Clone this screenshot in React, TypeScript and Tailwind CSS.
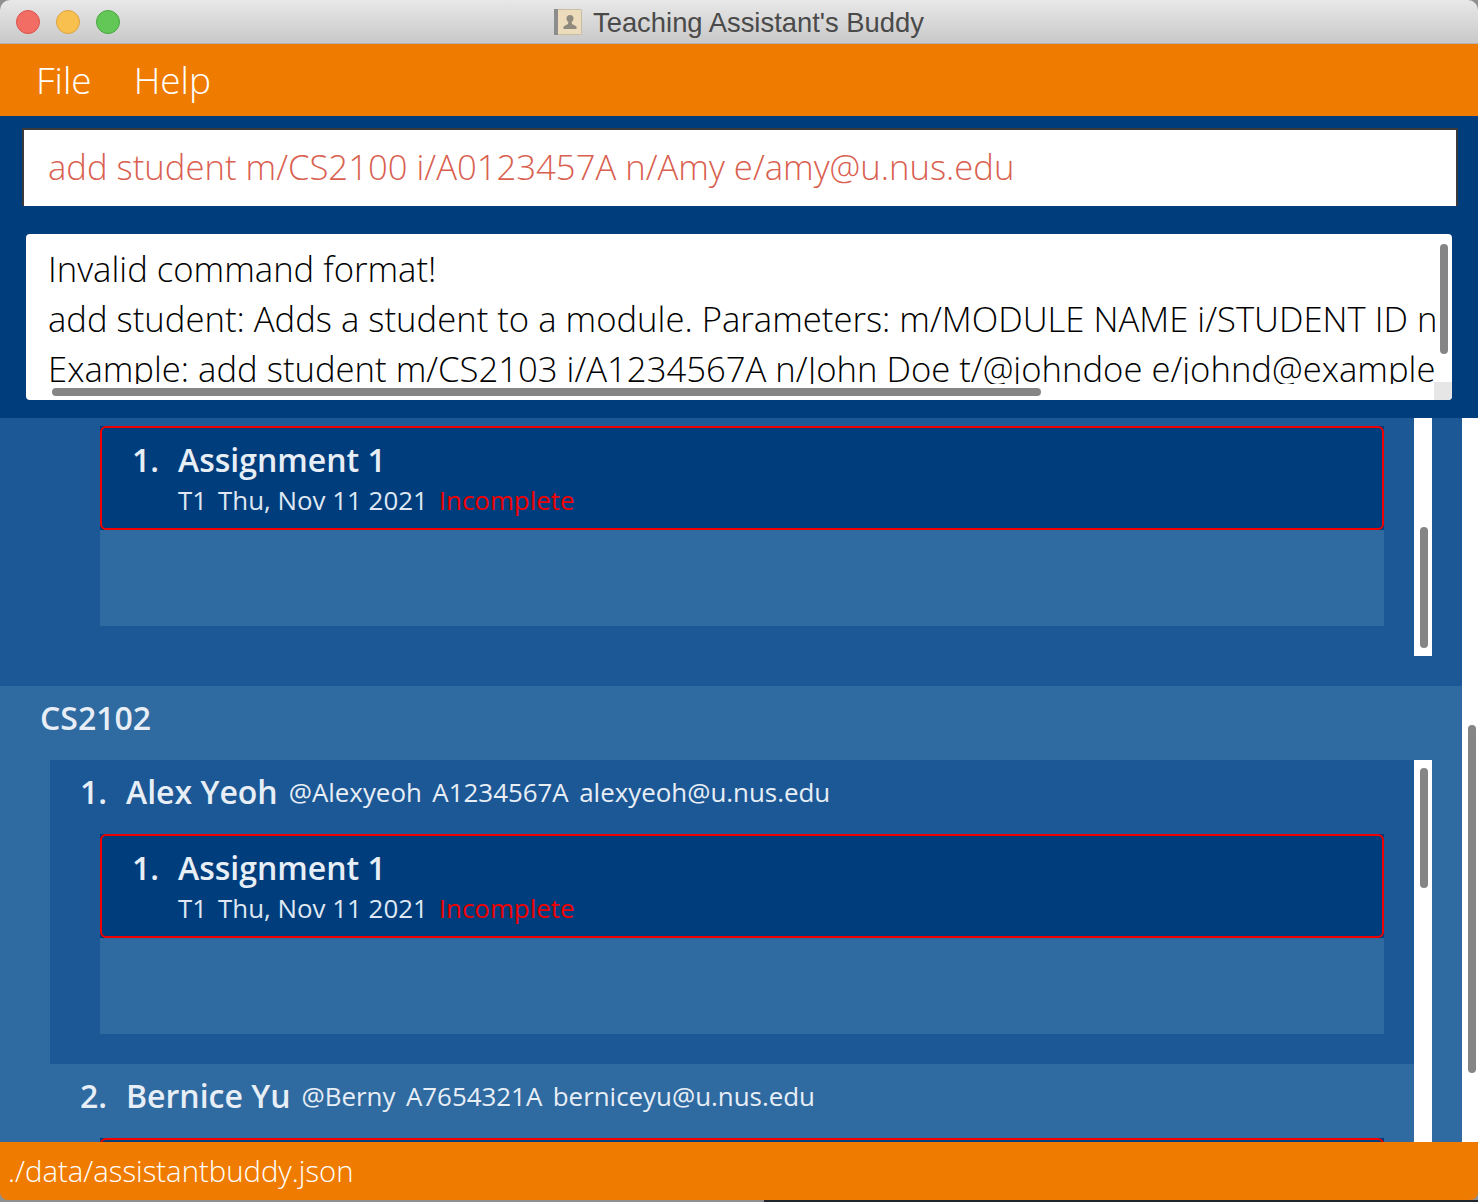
const font = "font-['Open_Sans',sans-serif]";

function Assignment() {
  return (
    <div className="bg-[#2f6aa1]">
      <div className="h-[104px] bg-[#003d7c]">
        <div className="flex h-full flex-col rounded-[6px] border-2 border-[#f00000] pl-[30px] pt-[12px]">
          <div className="flex items-baseline text-[#e8eef6]">
            <span className="w-[46px] text-[32px] leading-[40px] font-semibold">1.</span>
            <span className="text-[32px] leading-[40px] font-semibold">Assignment 1</span>
          </div>
          <div className="flex gap-[11px] pl-[46px] text-[25.9px] leading-[40px]">
            <span className="text-[#dfe8f2]">T1</span>
            <span className="text-[#dfe8f2]">Thu, Nov 11 2021</span>
            <span className="text-[#f00000]">Incomplete</span>
          </div>
        </div>
      </div>
      <div className="h-[96px]" />
    </div>
  );
}

function StudentHeader({
  index,
  name,
  handle,
  id,
  email,
}: {
  index: string;
  name: string;
  handle: string;
  id: string;
  email: string;
}) {
  return (
    <div className="flex h-[60px] items-center pl-[30px] pt-[4px] text-[#e8eef6]">
      <span className="w-[46px] text-[32px] font-semibold">{index}</span>
      <span className="text-[32px] font-semibold">{name}</span>
      <div className="ml-[11px] flex gap-[10.5px] text-[25.9px] font-normal">
        <span>{handle}</span>
        <span>{id}</span>
        <span>{email}</span>
      </div>
    </div>
  );
}

export default function App() {
  return (
    <div className={`h-[1202px] w-[1478px] overflow-hidden bg-[#8f8f8f] ${font}`}>
      <div className="flex h-[1200px] flex-col overflow-hidden rounded-t-[10px] rounded-b-[8px]">
        {/* title bar */}
        <div className="relative flex h-[44px] shrink-0 items-center justify-center border-b border-[#b4b4b4] bg-gradient-to-b from-[#e8e8e8] to-[#c9c9c9]">
          <div className="absolute left-[16px] top-[10px] flex gap-[16px]">
            <span className="size-[24px] rounded-full border border-[#d9534c] bg-[#f26d63]" />
            <span className="size-[24px] rounded-full border border-[#dca23f] bg-[#f8c04f]" />
            <span className="size-[24px] rounded-full border border-[#4aa83f] bg-[#62c757]" />
          </div>
          <svg width="28" height="26" viewBox="0 0 28 26" className="mr-[11px]">
            <rect x="0.5" y="0.5" width="27" height="25" rx="1" fill="#ecdcbc" stroke="#c9bda3" />
            <rect x="0" y="0" width="4" height="26" fill="#8d8d8d" />
            <circle cx="16" cy="9.5" r="3.5" fill="#8f8a7d" />
            <path d="M14.5 12h3l.5 3 4.5 2.5V20H9.5v-2.5L14 15z" fill="#8f8a7d" />
          </svg>
          <span className="pt-[2px] font-['Liberation_Sans',sans-serif] text-[27.4px] leading-none text-[#4a4a4a]">
            Teaching Assistant's Buddy
          </span>
        </div>

        {/* menu */}
        <div className="flex h-[72px] shrink-0 items-center gap-[42px] bg-[#ef7c00] pl-[36px] text-[37px] font-light text-white">
          <span>File</span>
          <span>Help</span>
        </div>

        {/* command box + result */}
        <div className="h-[302px] shrink-0 bg-[#003d7c] pl-[22px] pr-[20px] pt-[12px]">
          <div className="flex h-[78px] items-center border-t-2 border-r-2 border-l-2 border-[#3a3a3a] bg-white pb-[2px] pl-[24px] text-[34.67px] font-light text-[#d9604f]">
            add student m/CS2100 i/A0123457A n/Amy e/amy@u.nus.edu
          </div>
          <div className="relative mt-[28px] ml-[4px] mr-[6px] h-[166px] overflow-hidden rounded-[4px] bg-white text-[34.67px] leading-[50px] font-light whitespace-nowrap text-black">
            <div className="ml-[22px] h-[150px] w-[1387px] overflow-hidden pt-[10px]">
              <div>Invalid command format!</div>
              <div>add student: Adds a student to a module. Parameters: m/MODULE NAME i/STUDENT ID n/NAME</div>
              <div>Example: add student m/CS2103 i/A1234567A n/John Doe t/@johndoe e/johnd@example.com</div>
            </div>
            {/* scrollbars */}
            <div className="absolute right-[4px] top-[10px] h-[110px] w-[8px] rounded-full bg-[#858585]" />
            <div className="absolute bottom-[4px] left-[26px] h-[8px] w-[989px] rounded-full bg-[#858585]" />
            <div className="absolute right-0 bottom-0 size-[18px] bg-[#e6e6e6]" />
          </div>
        </div>

        {/* module list */}
        <div className="flex min-h-0 flex-1">
          <div className="min-w-0 flex-1 overflow-hidden">
            <div className="flex h-[268px] bg-[#1c5895] pl-[100px]">
              <div className="w-[1284px] pt-[8px]">
                <Assignment />
              </div>
              <div className="ml-[30px] h-[238px] w-[18px] bg-white pl-[6px] pr-[4px] pt-[109px]">
                <div className="h-[121px] rounded-full bg-[#858585]" />
              </div>
            </div>
            <div className="h-[456px] bg-[#2f6aa1]">
              <div className="flex h-[74px] items-center pb-[10px] pl-[40px] text-[32px] font-semibold text-[#e8eef6]">
                CS2102
              </div>
              <div className="flex pl-[50px]">
                <div className="w-[1364px]">
                  <div className="h-[304px] bg-[#1c5895]">
                    <StudentHeader
                      index="1."
                      name="Alex Yeoh"
                      handle="@Alexyeoh"
                      id="A1234567A"
                      email="alexyeoh@u.nus.edu"
                    />
                    <div className="ml-[50px] mr-[30px] mt-[14px]">
                      <Assignment />
                    </div>
                  </div>
                  <StudentHeader
                    index="2."
                    name="Bernice Yu"
                    handle="@Berny"
                    id="A7654321A"
                    email="berniceyu@u.nus.edu"
                  />
                  <div className="ml-[50px] mr-[30px] mt-[14px]">
                    <Assignment />
                  </div>
                </div>
                <div className="h-[382px] w-[18px] bg-white pl-[6px] pr-[4px] pt-[8px]">
                  <div className="h-[120px] rounded-full bg-[#858585]" />
                </div>
              </div>
            </div>
          </div>
          <div className="w-[16px] shrink-0 bg-white pl-[6px] pr-[2px] pt-[307px]">
            <div className="h-[348px] rounded-full bg-[#858585]" />
          </div>
        </div>

        {/* status bar */}
        <div className="flex h-[58px] shrink-0 items-center bg-[#ef7c00] pt-[2px] pl-[8px] text-[29.3px] font-light whitespace-nowrap text-white">
          ./data/assistantbuddy.json
        </div>
      </div>
      {/* desktop showing under the window */}
      <div className="ml-[764px] h-[2px] bg-[#20262c]" />
    </div>
  );
}
